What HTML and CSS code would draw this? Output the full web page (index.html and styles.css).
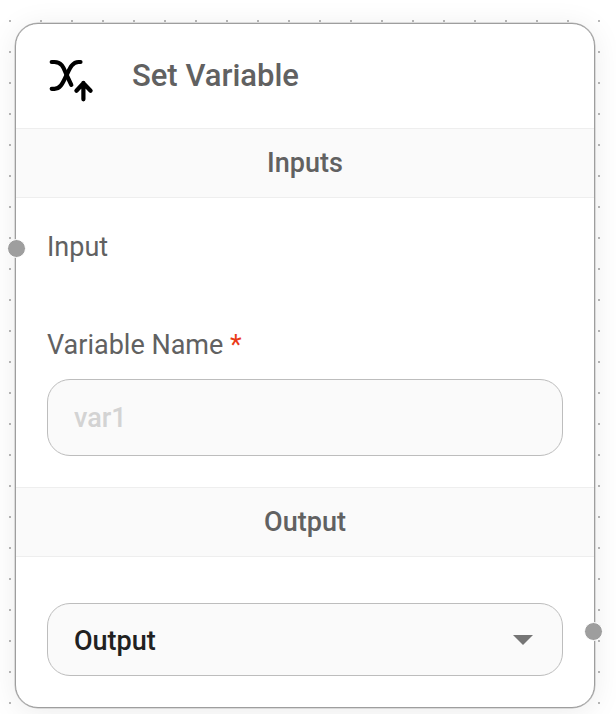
FILE: index.html
```html
<!DOCTYPE html>
<html lang="en">
<head>
<meta charset="utf-8">
<title>Set Variable</title>
<link rel="stylesheet" href="styles.css">
</head>
<body>
<main class="canvas">
  <article class="node">
    <header class="node-header">
      <svg class="node-icon" viewBox="0 0 44 44" fill="none" stroke="#000" stroke-width="4.2" stroke-linecap="round" stroke-linejoin="round">
        <path d="M3.700 5H6.500C14.500 5 16 12 18.600 18L23.300 27.800"/>
        <path d="M32.500 5H30.500C24 5 21.500 12 18.600 18C15 25 13 31.800 6.500 31.800H3.700"/>
        <path d="M35.400 42.300V25.800M28.400 33.700L35.400 26.200L42.600 33.700"/>
      </svg>
      <h1 class="node-title">Set Variable</h1>
    </header>
    <h2 class="section">Inputs</h2>
    <div class="inputs">
      <div class="row">Input<span class="port port-in"></span></div>
      <label class="label" for="name">Variable Name <span class="required">*</span></label>
      <input class="field" id="name" placeholder="var1">
    </div>
    <h2 class="section">Output</h2>
    <div class="outputs">
      <div class="select">
        <span>Output</span>
        <svg class="caret" viewBox="0 0 20 10"><path d="M0 0H20L10 10Z" fill="#757575"/></svg>
      </div>
      <span class="port port-out"></span>
    </div>
  </article>
</main>
</body>
</html>
```

FILE: styles.css
```css
* { box-sizing: border-box; }
body { margin: 0; background: #fff; font-family: Roboto, sans-serif; color: #616161; }
.canvas {
  height: 714px;
  padding: 23px 21px 0 15px;
  overflow: hidden;
  background: radial-gradient(circle at 15px 15px, #b8b8b8 1px, transparent 1.2px) -5px 6px / 31px 31px;
}
.node {
  position: relative;
  width: 580px;
  height: 685px;
  border: 1px solid #9e9e9e;
  border-radius: 23px;
  background: #fff;
  box-shadow: 0 0 0 0.5px #bdbdbd, 0 4px 30px rgba(0, 0, 0, 0.08);
}
.node-header { display: flex; align-items: center; height: 104px; padding-left: 32px; }
.node-icon { width: 44px; height: 44px; margin-top: 5px; overflow: visible; }
.node-title { margin: 0 0 0 40px; font-size: 31px; line-height: 40px; font-weight: 500; }
.section {
  height: 70px;
  margin: 0;
  border-top: 1px solid #eee;
  border-bottom: 1px solid #eee;
  background: #fafafa;
  font-size: 27px;
  line-height: 68px;
  font-weight: 500;
  text-align: center;
}
.inputs { height: 289px; padding: 29px 31px 0; font-size: 27px; }
.row { height: 98px; line-height: 40px; }
.label { display: block; height: 54px; line-height: 40px; }
.required { color: #ea3a16; }
.field {
  display: block;
  width: 516px;
  height: 77px;
  padding: 0 26px;
  border: 1px solid #bdbdbd;
  border-radius: 23px;
  background: #fafafa;
  font: 500 27px Roboto, sans-serif;
}
.field::placeholder { color: #d3d3d3; opacity: 1; }
.outputs { padding: 46px 31px 0; }
.select {
  display: flex;
  align-items: center;
  justify-content: space-between;
  width: 516px;
  height: 73px;
  padding: 2px 29px 0 26px;
  border: 1px solid #bdbdbd;
  border-radius: 23px;
  background: #fafafa;
  color: #212121;
  font-size: 27px;
  font-weight: 500;
}
.caret { width: 20px; height: 10px; margin-top: -1px; }
.port {
  position: absolute;
  width: 19px;
  height: 19px;
  border: 1px solid #fff;
  border-radius: 50%;
  background: #9e9e9e;
}
.port-in { left: -9px; top: 215px; }
.port-out { right: -9px; top: 598px; }
```
